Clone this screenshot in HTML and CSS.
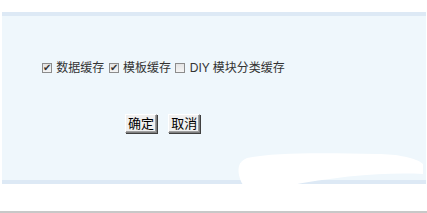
FILE: index.html
```html
<!DOCTYPE html>
<html lang="zh-CN">
<head>
    <meta charset="UTF-8">
    <title>更新缓存</title>
    <link rel="stylesheet" href="styles.css">
</head>
<body>
    <!-- 主面板 -->
    <div class="panel">
        <form class="cache-form">
            <div class="options">
                <label><input type="checkbox" checked> 数据缓存</label>
                <label><input type="checkbox" checked> 模板缓存</label>
                <label><input type="checkbox"> DIY 模块分类缓存</label>
            </div>
            <div class="actions">
                <button type="button" class="btn">确定</button>
                <button type="button" class="btn">取消</button>
            </div>
        </form>
        <!-- 右下角的涂抹痕迹 -->
        <svg class="smudge" width="190" height="40" viewBox="0 0 190 40">
            <path d="M10 8 C 40 2, 90 3, 140 4 C 160 4, 180 8, 186 14 L 186 24 C 150 22, 100 26, 50 36 L 10 40 C 4 34, 0 24, 2 16 C 3 12, 6 10, 10 8 Z" fill="#fff"/>
        </svg>
    </div>
    <div class="bottom-line"></div>
</body>
</html>
```

FILE: styles.css
```css
/* 整体 */
body {
    margin: 0;
    padding: 0;
    background-color: #fff;
    font-family: "Microsoft YaHei", "Liberation Sans", "Noto Sans CJK SC", sans-serif;
    font-size: 12px;
    color: #333;
}

/* 浅蓝色面板 */
.panel {
    position: relative;
    margin: 12px 1px 0 2px;
    height: 164px;
    background-color: #eff7fc;
    border-top: 4px solid #dde9f5;
    border-bottom: 4px solid #dde9f5;
}

.cache-form {
    padding: 42px 0 0 39px;
}

/* 灰色复选框 */
.options input {
    appearance: none;
    -webkit-appearance: none;
    position: relative;
    width: 10px;
    height: 10px;
    margin: 0 1px 0 1px;
    vertical-align: -1px;
    border: 1px solid #8c8c8c;
    background: linear-gradient(#e4e4e4, #f4f4f4);
}

.options input:checked::after {
    content: "✔";
    position: absolute;
    left: 0;
    top: -2px;
    font-size: 10px;
    color: #333;
}

/* 按钮区 */
.actions {
    padding: 39px 0 0 84px;
}

.btn {
    font-family: "Microsoft YaHei", "Liberation Sans", "Noto Sans CJK SC", sans-serif;
    font-size: 13px;
    color: #000;
    height: 19px;
    padding: 0 2px;
    margin-right: 8px;
    background-color: #f0f0f0;
    border: 1px solid;
    border-color: #fff #808080 #808080 #fff;
    box-shadow: 1px 1px 0 #404040, inset -1px -1px 0 #a0a0a0;
    line-height: 16px;
}

.smudge {
    position: absolute;
    right: -1px;
    bottom: -10px;
}

/* 底部灰线 */
.bottom-line {
    margin-top: 27px;
    height: 2px;
    background-color: #c8c8c8;
}
```
